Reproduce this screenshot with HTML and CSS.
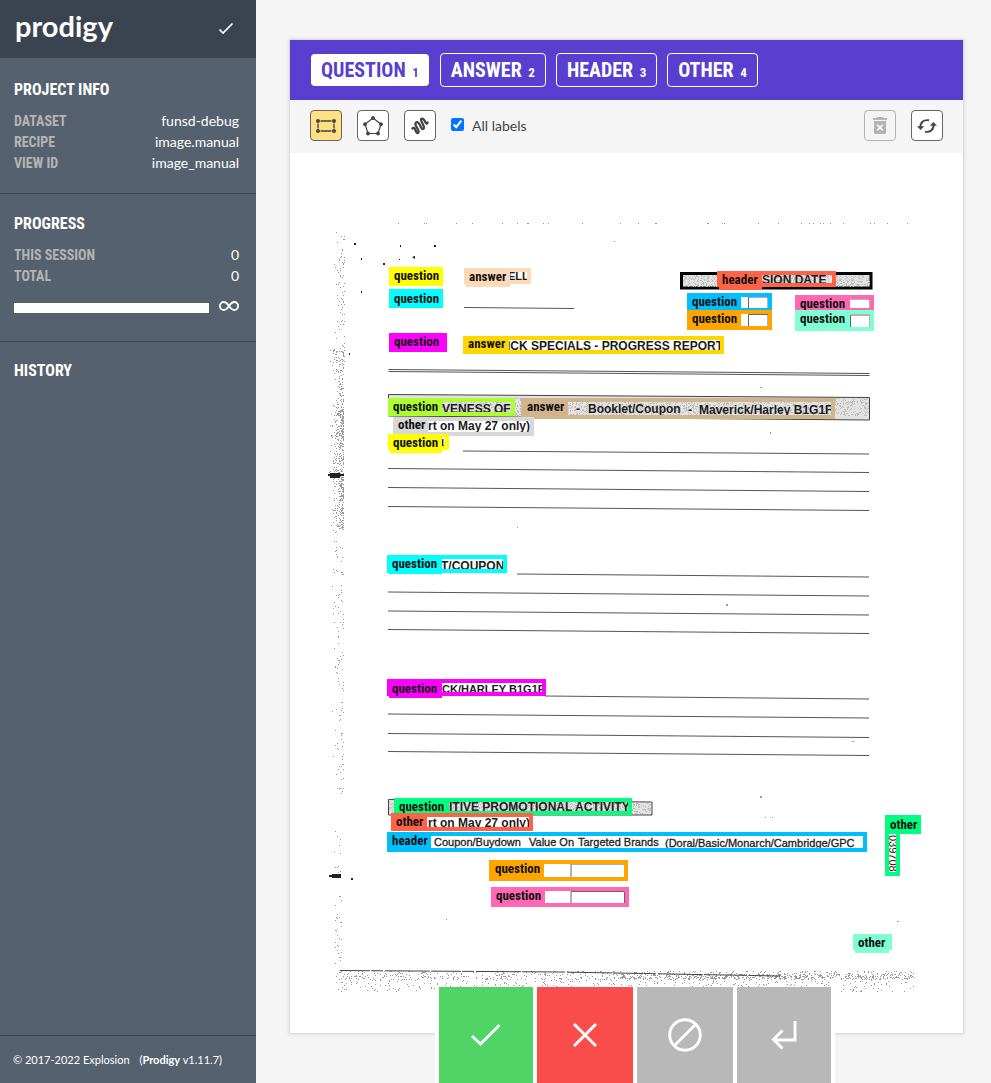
FILE: index.html
```html
<!DOCTYPE html>
<html lang="en">
<head>
<meta charset="utf-8">
<meta name="viewport" content="width=device-width, initial-scale=1">
<title>Prodigy</title>
<link rel="stylesheet" href="styles.css">
</head>
<body>
<div class="app">
  <aside class="sidebar">
    <header class="brand">
      <h1 class="logo">prodigy</h1>
      <button class="save" type="button" aria-label="Save">
        <svg width="16" height="14" viewBox="0 0 16 14"><path d="M1.5 7.5 5 11 14.5 1.5" fill="none" stroke="currentColor" stroke-width="1.7"/></svg>
      </button>
    </header>
    <section class="panel first">
      <h2>Project Info</h2>
      <dl class="facts">
        <dt>Dataset</dt><dd>funsd-debug</dd>
        <dt>Recipe</dt><dd>image.manual</dd>
        <dt>View ID</dt><dd>image_manual</dd>
      </dl>
    </section>
    <section class="panel">
      <h2>Progress</h2>
      <dl class="facts">
        <dt>This session</dt><dd>0</dd>
        <dt>Total</dt><dd>0</dd>
      </dl>
      <div class="progress">
        <div class="bar"></div>
        <svg width="20" height="10" viewBox="0 0 20 10"><path d="M10 5C8.300 2.600 7 1 4.900 1a4 4 0 0 0 0 8C7 9 8.300 7.400 10 5S13 1 15.100 1a4 4 0 0 1 0 8C13 9 11.700 7.400 10 5Z" fill="none" stroke="currentColor" stroke-width="1.800"/></svg>
      </div>
    </section>
    <section class="panel history">
      <h2>History</h2>
    </section>
    <footer class="legal"><span>© 2017-2022 Explosion</span><span>(<b>Prodigy</b> v1.11.7)</span></footer>
  </aside>

  <main class="main">
    <article class="card">
      <nav class="labels">
        <button class="label active" type="button">Question <small>1</small></button>
        <button class="label" type="button">Answer <small>2</small></button>
        <button class="label" type="button">Header <small>3</small></button>
        <button class="label" type="button">Other <small>4</small></button>
      </nav>
      <div class="toolbar">
        <button class="tool selected" type="button" aria-label="Rectangle">
          <svg width="20" height="16" viewBox="0 0 20 16"><path d="M4.500 3H15.500M4.500 13H15.500M2 5.500V10.500M18 5.500V10.500" stroke="currentColor" stroke-width="1.300"/><g fill="currentColor"><circle cx="2" cy="3" r="2"/><circle cx="18" cy="3" r="2"/><circle cx="2" cy="13" r="2"/><circle cx="18" cy="13" r="2"/></g></svg>
        </button>
        <button class="tool" type="button" aria-label="Polygon">
          <svg width="20" height="20" viewBox="0 0 20 20"><path d="M10 2 18 8.200 15 17.500H5L2 8.200Z" fill="none" stroke="currentColor" stroke-width="1.200"/><g fill="currentColor"><circle cx="10" cy="2" r="1.900"/><circle cx="18" cy="8.200" r="1.900"/><circle cx="15" cy="17.500" r="1.900"/><circle cx="5" cy="17.500" r="1.900"/><circle cx="2" cy="8.200" r="1.900"/></g></svg>
        </button>
        <button class="tool" type="button" aria-label="Freehand">
          <svg width="18" height="18" viewBox="0 0 18 18"><path d="M1.500 11.500C2 10.500 3.500 10.500 4.200 12.500S6 17.200 7.300 15.800 6.500 11.500 5.300 9.500 4 5.300 6 5.100 9 8.500 10.200 10.700 13.300 12.200 12.800 9.700 10.300 5 10.100 3 12.300 1.200 13.500 3.500 15.500 8 16.600 5.500" fill="none" stroke="currentColor" stroke-width="2.300" stroke-linecap="round"/></svg>
        </button>
        <label class="all"><input type="checkbox" checked><span>All labels</span></label>
        <button class="tool disabled push" type="button" disabled aria-label="Delete">
          <svg width="14" height="18" viewBox="0 0 14 18"><path fill="currentColor" fill-rule="evenodd" d="M4.500 0h5l1 1H14v2H0V1h3.500ZM1 4h12v11.500Q13 17 11.500 17h-9Q1 17 1 15.500ZM4.900 7.200 3.700 8.400 5.800 10.500 3.700 12.600 4.900 13.800 7 11.700 9.100 13.800 10.300 12.600 8.200 10.500 10.300 8.400 9.100 7.200 7 9.300Z"/></svg>
        </button>
        <button class="tool" type="button" aria-label="Reset">
          <svg width="20" height="16" viewBox="0 0 20 16"><path d="M3.500 9.500C3 5 6.500 1.200 12 2.300M16.500 6.500C17 11 13.500 14.800 8 13.700" fill="none" stroke="currentColor" stroke-width="1.900"/><path fill="currentColor" d="M0 8.300h7.200L3.600 12ZM12.800 7.700H20L16.400 4Z"/></svg>
        </button>
      </div>

      <svg class="page" viewBox="290 153 673 880" role="img" aria-label="Annotated form">
        <path id="specks" class="specks"/>
        <g class="blobs">
          <path d="M328 474h16v2h-16zM330 473h10v5h-10zM329 875h12v2h-12zM332 874h9v4h-9zM351 878h2v2h-2zM412 257l3-1v3zM354 243h2v2h-2zM400 245h1v2h-1zM434 245h2v2h-2zM361 258h1v2h-1zM383 263h2v2h-2zM361 291h1v2h-1zM349 353h1v2h-1zM399 259h1v1h-1z"/>
          <path class="faint" d="M614 241h1v1h-1zM760 796h2v2h-2zM726 604h2v2h-2zM852 741h2v1h-2zM446 919h1v1h-1zM897 921h2v1h-2zM760 387h2v1h-2zM770 432h1v2h-1zM765 817h1v1h-1zM772 817h1v1h-1zM517 527h1v1h-1z"/>
        </g>
        <g class="rules">
          <path d="M464 307.500 574 308.500"/>
          <path d="M388.500 369.500 869.500 373.500M388.500 371.500 869.500 375.500"/>
          <path d="M463 451 869 454M388 468.500 869 472.500M388 487.500 869 491.500M388 506.500 869 510.500"/>
          <path d="M517 574 869 577M388 592 869 596M388 611 869 615M388 629.500 869 633.500"/>
          <path d="M545 696 869 699M388 714 869 718M388 733.500 869 737.500M388 751.500 869 755.500"/>
          <path class="edge" d="M340 970.500 560 972 780 976"/>
        </g>
        <g class="shaded">
          <path class="thick" d="M681.500 273.500H871V288H681.500Z"/>
          <path d="M388.500 394.500 869.500 397.500V420L388.500 416Z"/>
          <path d="M388.500 799.500 652 802V815H388.500Z"/>
          <path id="grain" class="grain"/>
        </g>
        <g class="scan">
          <text class="small" x="508" y="280">ELL</text>
          <text x="762" y="284">SION DATE</text>
          <text x="507" y="350">ICK SPECIALS - PROGRESS REPORT</text>
          <text x="442" y="413">VENESS OF:</text>
          <text x="576" y="413">-</text>
          <text x="588" y="413">Booklet/Coupon</text>
          <text x="688" y="414">-</text>
          <text x="699" y="414">Maverick/Harley B1G1F</text>
          <text x="428" y="430">rt on May 27 only)</text>
          <text class="small" x="441" y="447">L</text>
          <text x="441" y="570">T/COUPON</text>
          <text class="small" x="442" y="693">CK/HARLEY B1G1F</text>
          <text x="449" y="811">ITIVE PROMOTIONAL ACTIVITY</text>
          <text x="428" y="827">rt on May 27 only)</text>
          <g class="light">
            <text x="434" y="846">Coupon/Buydown</text>
            <text x="529" y="846">Value On</text>
            <text x="578" y="846">Targeted Brands</text>
            <text x="665" y="847">(Doral/Basic/Monarch/Cambridge/GPC</text>
          </g>
          <text class="side" transform="translate(889 835) rotate(90)">039708</text>
        </g>
        <g class="cells">
          <path d="M748.500 309V297H768V309M748.500 327V314.500H768V326.500H748.500M850.500 299H870V308M850.500 315H870V328H850.500ZM571 877V864H624.500V877M571 904V891.500H624.500V904"/>
        </g>
        <g class="mark yellow"><rect class="tag" x="389" y="267" width="54" height="19"/><text x="394" y="280">question</text></g>
        <g class="mark peach"><rect x="466" y="270" width="63" height="12"/><rect class="tag" x="466" y="270" width="44" height="17"/><text x="469" y="281">answer</text></g>
        <g class="mark cyan"><rect class="tag" x="389" y="289" width="54" height="19"/><text x="394" y="303">question</text></g>
        <g class="mark magenta"><rect class="tag" x="389" y="333" width="58" height="19"/><text x="394" y="346">question</text></g>
        <g class="mark gold"><rect x="465" y="338" width="257" height="14"/><rect class="tag" x="465" y="338" width="44" height="16"/><text x="468" y="348">answer</text></g>
        <g class="mark tomato"><rect x="719" y="273" width="115" height="12"/><rect class="tag" x="719" y="272" width="43" height="18"/><text x="722" y="284">header</text></g>
        <g class="mark sky"><rect x="689" y="295" width="81" height="15"/><rect class="tag" x="688" y="294" width="53" height="18"/><text x="692" y="306">question</text></g>
        <g class="mark orange"><rect x="689" y="312" width="81" height="16"/><rect class="tag" x="688" y="311" width="53" height="18"/><text x="692" y="323">question</text></g>
        <g class="mark pink"><rect x="797" y="297" width="75" height="13"/><rect class="tag" x="796" y="296" width="54" height="15"/><text x="800" y="308">question</text></g>
        <g class="mark aqua"><rect x="797" y="312" width="75" height="17"/><rect class="tag" x="796" y="311" width="54" height="18"/><text x="800" y="323">question</text></g>
        <g class="mark lime"><rect x="390" y="400" width="123" height="14"/><rect class="tag" x="389" y="399" width="53" height="17"/><text x="393" y="411">question</text></g>
        <g class="mark tan"><rect x="523" y="400" width="310" height="17"/><rect class="tag" x="523" y="399" width="45" height="18"/><text x="527" y="411">answer</text></g>
        <g class="mark silver"><rect x="395" y="419" width="137" height="15"/><rect class="tag" x="395" y="418" width="33" height="17"/><text x="398" y="429">other</text></g>
        <g class="mark yellow"><rect x="390" y="436" width="57" height="12"/><rect class="tag" x="390" y="436" width="52" height="17"/><text x="393" y="447">question</text></g>
        <g class="mark cyan"><rect x="389" y="557" width="116" height="14"/><rect class="tag" x="389" y="556" width="53" height="18"/><text x="392" y="568">question</text></g>
        <g class="mark magenta"><rect x="389" y="681" width="155" height="13"/><rect class="tag" x="389" y="681" width="53" height="17"/><text x="392" y="693">question</text></g>
        <g class="mark spring"><rect x="396" y="800" width="234" height="13"/><rect class="tag" x="395" y="799" width="54" height="17"/><text x="399" y="811">question</text></g>
        <g class="mark tomato"><rect x="393" y="815" width="138" height="14"/><rect class="tag" x="392" y="814" width="35" height="17"/><text x="396" y="826">other</text></g>
        <g class="mark sky"><rect x="389" y="834" width="476" height="16"/><rect class="tag" x="388" y="833" width="43" height="18"/><text x="392" y="845">header</text></g>
        <g class="mark orange"><rect x="491" y="862" width="135" height="17"/><rect class="tag" x="490" y="861" width="54" height="18"/><text x="495" y="873">question</text></g>
        <g class="mark pink"><rect x="493" y="889" width="134" height="16"/><rect class="tag" x="492" y="888" width="53" height="18"/><text x="496" y="900">question</text></g>
        <g class="mark spring"><rect x="887" y="817" width="11" height="57"/><rect class="tag" x="885" y="815" width="36" height="19"/><text x="890" y="829">other</text></g>
        <g class="mark aqua"><rect class="tag" x="853" y="934" width="39" height="16"/><rect class="tag" x="855" y="950" width="34" height="3"/><text x="858" y="947">other</text></g>
      </svg>
    </article>

    <div class="dock">
      <div class="actions">
        <button class="act accept" type="button" aria-label="Accept"><svg width="32" height="24" viewBox="0 0 32 24"><path d="M2 13 10.500 21 29.500 2" fill="none" stroke="currentColor" stroke-width="2.700"/></svg></button>
        <button class="act reject" type="button" aria-label="Reject"><svg width="24" height="24" viewBox="0 0 24 24"><path d="M1 1 23 23M23 1 1 23" stroke="currentColor" stroke-width="2.900"/></svg></button>
        <button class="act" type="button" aria-label="Ignore"><svg width="34" height="34" viewBox="0 0 34 34"><g fill="none" stroke="currentColor" stroke-width="2.900"><circle cx="17" cy="17" r="15.300"/><path d="M6.500 27.500 27.500 6.500"/></g></svg></button>
        <button class="act" type="button" aria-label="Undo"><svg width="26" height="30" viewBox="0 0 26 30"><path d="M24 1V20H3M11.500 10.500 2.500 19.500 11.500 28.500" fill="none" stroke="currentColor" stroke-width="2.900"/></svg></button>
      </div>
    </div>
  </main>
</div>
<script src="grain.js"></script>
</body>
</html>
```
FILE: styles.css
```css
* { box-sizing: border-box; }
body {
  margin: 0;
  font-family: Lato, "Open Sans", sans-serif;
  background: #f5f5f5;
  color: #444;
}
button { font: inherit; color: inherit; padding: 0; margin: 0; cursor: pointer; }
svg { display: block; }

.app { display: grid; grid-template-columns: 256px 1fr; min-height: 100vh; }

.sidebar {
  display: flex;
  flex-direction: column;
  background: #56616f;
  color: #fff;
}
.brand {
  display: flex;
  align-items: center;
  justify-content: space-between;
  height: 58px;
  padding: 0 22px 0 15px;
  background: #3a4451;
}
.logo { margin: 0; padding-bottom: 6px; font: 700 29px/36px Lato, sans-serif; }
.save { border: 0; background: none; }
.panel { padding: 18px 17px 24px 14px; border-bottom: 1px solid #3a4451; }
.panel.first { padding-top: 20px; padding-bottom: 19px; }
.panel h2 {
  margin: 0 0 10px;
  font: 700 16px/23px "Roboto Condensed", Roboto, sans-serif;
  text-transform: uppercase;
}
.facts {
  display: grid;
  grid-template-columns: auto auto;
  grid-auto-rows: 21px;
  justify-content: space-between;
  margin: 0;
}
.facts dt {
  font: 700 14px/21px "Roboto Condensed", Roboto, sans-serif;
  text-transform: uppercase;
  color: #b4b4b4;
}
.facts dd { margin: 0; font-size: 14px; line-height: 19px; text-align: right; }
.progress { display: flex; align-items: center; gap: 10px; height: 30px; padding-top: 8px; }
.bar { flex: 1; height: 10px; margin-top: 4px; background: #fff; }
.panel.history { flex: 1; padding-top: 17px; }
.legal { display: flex; gap: 10px; padding: 16px 13px; font-size: 11px; line-height: 15px; }

.main { position: relative; padding: 39px 27px 49px 33px; }
.card { border: 1px solid #ddd; background: #fff; box-shadow: 0 0 4px rgba(0, 0, 0, 0.12); }
.labels { display: flex; flex-wrap: wrap; gap: 10px; padding: 13px 20px; background: #583fcf; color: #fff; }
.label {
  height: 34px;
  padding: 0 10px;
  border: 1px solid #fff;
  border-radius: 4px;
  background: none;
  font: 700 20px/32px "Roboto Condensed", Roboto, sans-serif;
  text-transform: uppercase;
}
.label small { margin-left: 2px; font-size: 13px; }
.label.active { border-color: #583fcf; background: #fff; background-clip: padding-box; color: #583fcf; }

.toolbar { display: flex; align-items: center; gap: 15px; height: 53px; padding: 0 20px 2px; background: #f5f5f5; }
.tool {
  display: grid;
  place-items: center;
  width: 32px;
  height: 31px;
  border: 1px solid #666;
  border-radius: 4px;
  background: #fff;
}
.tool.selected { background: #ffe184; }
.tool.disabled { border-color: #b4b4b4; background: #f5f5f5; color: #b4b4b4; }
.push { margin-left: auto; }
.all { display: flex; align-items: center; gap: 8px; font-size: 14px; line-height: 20px; }
.all input { width: 13px; height: 13px; margin: 0 0 3px; }

.page { width: 100%; height: auto; }
.specks { stroke: #999; stroke-width: 1; fill: none; }
.blobs { fill: #222; }
.blobs .faint { fill: #999; }
.rules path { fill: none; stroke: #555; stroke-width: 1; }
.rules .edge { stroke: #444; stroke-dasharray: 30 1 12 2 45 1; }
.shaded path { fill: #e2e2e2; stroke: #444; stroke-width: 1; }
.shaded .thick { stroke: #000; stroke-width: 3; }
.shaded .grain { fill: none; stroke: #bbb; }
.scan { font: 700 12px "Liberation Sans", Arial, sans-serif; fill: #1c1c1c; }
.scan .small { font-size: 11px; }
.scan .light { font-size: 11px; font-weight: 400; stroke: #1c1c1c; stroke-width: 0.3; }
.scan .side { font-weight: 400; font-size: 11px; }
.cells { fill: none; stroke: #666; }

.mark rect { fill: none; stroke: var(--c); stroke-width: 4; }
.mark .tag { fill: var(--c); stroke: none; }
.mark text { font: 700 13px "Roboto Condensed", Roboto, sans-serif; fill: #111; }
.yellow { --c: #ff0; }
.peach { --c: #ffdab9; }
.cyan { --c: #0ff; }
.magenta { --c: #f0f; }
.gold { --c: #ffd700; }
.tomato { --c: #ff6347; }
.sky { --c: #00bfff; }
.orange { --c: #ffa500; }
.pink { --c: #ff69b4; }
.aqua { --c: #7fffd4; }
.lime { --c: #adff2f; }
.tan { --c: #d2b48c; }
.silver { --c: #d8d8d8; }
.spring { --c: #00ff7f; }

.dock {
  position: absolute;
  inset: auto 11px 0 34px;
  display: flex;
  justify-content: center;
}
.actions { display: flex; gap: 4px; padding: 0 4px; background: #fff; }
.act {
  display: grid;
  place-items: center;
  width: 96px;
  height: 96px;
  border: 0;
  background: #b8b8b8;
  color: #fff;
}
.act:first-child, .act:last-child { width: 94px; }
.accept { background: #51d466; }
.reject { background: #f94d4b; }
```
FILE: grain.js
```js
// Seeded generator so that the scan noise is the same on every load.
let seed = 7;
const rnd = () => (seed = (seed * 16807) % 2147483647) / 2147483647;

const scatter = (n, x, y, w, h, pull = 1) => {
  let d = "";
  for (let i = 0; i < n; i++) {
    const px = Math.floor(x + w * Math.pow(rnd(), pull));
    const py = Math.floor(y + h * rnd());
    d += `M${px} ${py}.5h1`;
  }
  return d;
};

document.getElementById("specks").setAttribute("d", [
  scatter(90, 333, 232, 12, 130, 0.5),
  scatter(170, 329, 350, 15, 90, 0.4),
  scatter(420, 329, 410, 15, 120, 0.35),
  scatter(50, 330, 530, 14, 100, 0.5),
  scatter(70, 332, 630, 12, 165, 0.5),
  scatter(40, 334, 820, 8, 150),
  scatter(600, 336, 971, 578, 9),
  scatter(420, 336, 978, 578, 14),
  scatter(360, 620, 974, 294, 5),
  scatter(35, 390, 223, 520, 1)
].join(""));

document.getElementById("grain").setAttribute("d", [
  scatter(700, 683, 275, 187, 12),
  scatter(2600, 389, 398, 480, 18),
  scatter(800, 389, 802, 262, 12)
].join(""));
```
